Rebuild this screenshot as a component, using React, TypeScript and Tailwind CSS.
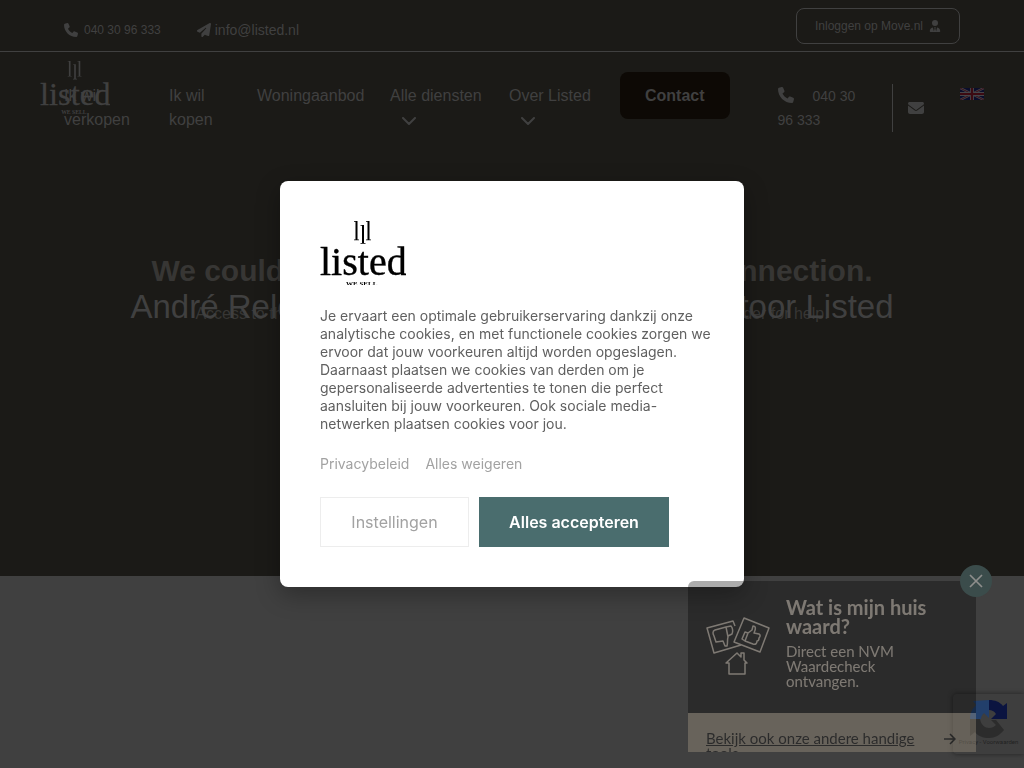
import { clsx } from "clsx";
import { FaEnvelope, FaPaperPlane, FaPhone, FaUserTie } from "react-icons/fa6";

interface LogoProps {
  className?: string;
}

function Logo({ className }: LogoProps) {
  return (
    <svg viewBox="0 0 86 64" className={className} fill="currentColor" role="img">
      <path d="M35 0h2.500v18.500H39v.7h-5v-.7h1.500V.7H34V0zM41.500 4H44v18H45.500v.7h-5V22H42V4.700h-1.500V4zM47 0h2.500v18.500H51v.7h-5v-.7h1.500V.7H46V0z" />
      <text x="0" y="54" fontSize="40" fontFamily="Liberation Serif, serif" stroke="currentColor" strokeWidth="0.400">
        listed
      </text>
      <text x="26" y="65" fontSize="7" fontWeight="700" fontFamily="Liberation Serif, serif">
        WE SELL
      </text>
    </svg>
  );
}

function Flag() {
  return (
    <svg viewBox="0 0 24 12" className="h-3 w-6">
      <path fill="#0a0d2b" d="M0 0h24v12H0z" />
      <path stroke="#45454a" strokeWidth="2.400" d="m0 0 24 12M24 0 0 12" />
      <path stroke="#3c0a12" strokeWidth="0.900" d="m0 0 24 12M24 0 0 12" />
      <path stroke="#45454a" strokeWidth="4" d="M12 0v12M0 6h24" />
      <path stroke="#3c0a12" strokeWidth="2.200" d="M12 0v12M0 6h24" />
    </svg>
  );
}

function ChevronDown() {
  return (
    <svg viewBox="0 0 14 8" className="ml-3 inline h-2 w-3.5" fill="none" stroke="currentColor" strokeWidth="2">
      <path strokeLinecap="round" strokeLinejoin="round" d="m1 1 6 6 6-6" />
    </svg>
  );
}

const navItems = [
  { label: "Ik wil verkopen", width: "w-[105px] pr-8", menu: false },
  { label: "Ik wil kopen", width: "w-[88px] pr-8", menu: false },
  { label: "Woningaanbod", width: "w-[133px]", menu: false },
  { label: "Alle diensten", width: "w-[119px] pr-6", menu: true },
  { label: "Over Listed", width: "w-[111px] pr-6", menu: true },
];

function TopBar() {
  return (
    <div className="flex h-[52px] items-start justify-between border-b border-[#404040] px-16 pt-2">
      <div className="flex gap-9 pt-3 leading-5">
        <a href="tel:0403096333" className="flex items-center gap-1.5 text-xs leading-5">
          <FaPhone className="size-3.5" />
          040 30 96 333
        </a>
        <a href="mailto:info@listed.nl" className="flex items-center gap-1 text-sm leading-5">
          <FaPaperPlane className="size-3.5" />
          info@listed.nl
        </a>
      </div>
      <a
        href="#inloggen"
        className="flex h-9 w-[164px] items-center justify-center gap-1.5 rounded-lg border border-[#404040] text-xs"
      >
        Inloggen op Move.nl
        <FaUserTie className="size-3" />
      </a>
    </div>
  );
}

function Header() {
  return (
    <header>
      <TopBar />
      <div className="relative flex items-start pt-8 pl-16 leading-6">
        <Logo className="absolute top-2 left-10 h-[54px] w-[70px]" />
        <nav className="flex">
          {navItems.map((item) => (
            <a key={item.label} href="#menu" className={clsx("block", item.width)}>
              {item.label}
              {item.menu && (
                <>
                  <br />
                  <ChevronDown />
                </>
              )}
            </a>
          ))}
        </nav>
        <a href="#contact" className="-mt-3 rounded-lg bg-[#0d0905] px-[25px] py-3 leading-[23px] font-bold">
          Contact
        </a>
        <a href="tel:0403096333" className="ml-12 w-[114px] pr-6 text-sm leading-6">
          <FaPhone className="mr-[15px] inline size-4 align-[-2px]" /> 040 30 96 333
        </a>
        <a
          href="mailto:info@listed.nl"
          aria-label="E-mail"
          className="flex h-12 items-center border-l border-[#404040] pl-[15px]"
        >
          <FaEnvelope className="size-4" />
        </a>
        <a href="#en" aria-label="English" className="mt-1 ml-9">
          <Flag />
        </a>
      </div>
    </header>
  );
}

function Hero() {
  return (
    <section className="relative h-[75vh] bg-[#1b1a17]">
      <Header />
      <div className="absolute inset-x-0 top-[252px] text-center text-[#373634]">
        <h2 className="text-[30px] leading-[38px] font-bold">We couldn’t verify the security of your connection.</h2>
        <p className="mt-3 leading-6">
          Access to this content has been restricted. Contact your internet service provider for help.
        </p>
      </div>
      <h1 className="absolute inset-x-0 top-[287px] text-center text-[33px] leading-10">
        André Relou Makelaardij is makelaarskantoor Listed
      </h1>
    </section>
  );
}

function RecaptchaBadge() {
  return (
    <div className="absolute right-0 bottom-3.5 flex h-[60px] w-[71px] flex-col items-center rounded-l-sm bg-[#3e3e3e] pt-1.5 shadow-[0_0_5px_#222]">
      <svg viewBox="0 0 38 38" className="size-[38px]">
        <path fill="#0b1440" d="M19 0c6 0 11 2 14 6l4-3v16H21l5-5c-2-3-4-4-7-4z" />
        <path fill="#223f6b" d="M19 0v18l-5-5c-2 2-3 4-3 6H0c0-6 2-10 6-14L3 1z" />
        <path fill="#2c2c2c" d="M0 19h10c1 6 5 9 9 9 3 0 5-1 7-3l-5-5h5l8 10c-4 5-9 8-15 8-6 0-11-2-14-6l-5 4z" />
      </svg>
      <span className="font-['Roboto',sans-serif] text-[6px] leading-2 text-[#222]">Privacy - Voorwaarden</span>
    </div>
  );
}

function HouseIcon() {
  return (
    <svg
      viewBox="0 0 64 58"
      className="h-[58px] w-16"
      fill="none"
      stroke="currentColor"
      strokeWidth="1.500"
      strokeLinejoin="round"
    >
      <path d="m29 9-2-5L1 11l7 25 27-8" />
      <path d="m38 1 25 10-9 24-26-10z" />
      <path d="M20 10 9 13c-3 1-2 4-1 6l2 6 7-1 2 5h2c1-3 0-6 1-9l-2-10zM20 10l5-1c2 2 2 6 1 8l-4 2" />
      <path d="m39 15 3 1-3 8-3-2zM42 16l4-3 1-4c3 0 3 3 1 7l5 1c2 1 1 3 0 4 0 1 0 3-2 3 0 2-1 4-4 3l-8-3" />
      <path d="M23 46h-3l11-10 4 4v-4h3v7l3 3h-2v11H23z" />
    </svg>
  );
}

function ValueWidget() {
  return (
    <aside className="fixed right-12 bottom-4 z-20 w-72 font-['Lato',sans-serif]">
      <div className="h-[171px] overflow-hidden rounded-t-md text-[#fff0dd] opacity-[0.325]">
        <div className="flex h-[132px] items-start gap-4 bg-black px-[18px]">
          <div className="pt-9">
            <HouseIcon />
          </div>
          <div className="flex-1 pt-[17px]">
            <h3 className="text-xl leading-[19px] font-bold">Wat is mijn huis waard?</h3>
            <p className="mt-2 w-32 text-[15px] leading-[15px]">Direct een NVM Waardecheck ontvangen.</p>
          </div>
        </div>
        <a
          href="#tools"
          className="flex items-start bg-[#bcac94] pt-[18px] pr-5 pl-[18px] text-[15px] leading-[15px] text-black"
        >
          <span className="flex-1 underline">Bekijk ook onze andere handige tools</span>
          <svg viewBox="0 0 12 12" className="mt-0.5 size-3" fill="none" stroke="currentColor" strokeWidth="1.500">
            <path d="M0 6h11M6 1l5 5-5 5" />
          </svg>
        </a>
      </div>
      <button
        type="button"
        aria-label="Sluiten"
        className="absolute -top-4 -right-4 grid size-8 place-items-center rounded-full bg-[#3b4c4b] text-[#8e8e8c]"
      >
        <svg viewBox="0 0 14 14" className="size-3.5" stroke="currentColor" strokeWidth="1.700">
          <path d="m1 1 12 12M13 1 1 13" />
        </svg>
      </button>
    </aside>
  );
}

function CookieDialog() {
  return (
    <div className="fixed inset-0 z-10 grid place-items-center font-['Inter',sans-serif]">
      <div
        role="dialog"
        aria-label="Cookies"
        className="w-[464px] rounded-lg bg-white p-10 shadow-[0_8px_24px_rgba(0,0,0,0.3)]"
      >
        <Logo className="h-16 w-[86px] text-black" />
        <p className="mt-[22px] -mr-4 text-sm leading-[18px] text-[#606060]">
          Je ervaart een optimale gebruikerservaring dankzij onze analytische cookies, en met functionele cookies
          zorgen we ervoor dat jouw voorkeuren altijd worden opgeslagen. Daarnaast plaatsen we cookies van derden om je
          gepersonaliseerde advertenties te tonen die perfect aansluiten bij jouw voorkeuren. Ook sociale
          media-netwerken plaatsen cookies voor jou.
        </p>
        <div className="mt-[22px] flex gap-4 text-sm leading-[18px] text-[#a2a2a2]">
          <a href="#privacy">Privacybeleid</a>
          <a href="#weigeren">Alles weigeren</a>
        </div>
        <div className="mt-6 flex gap-2.5">
          <button type="button" className="h-[50px] w-[149px] border border-[#ededed] text-[#a2a2a2]">
            Instellingen
          </button>
          <button type="button" className="h-[50px] w-[190px] bg-[#4a6d6e] font-semibold text-white">
            Alles accepteren
          </button>
        </div>
      </div>
    </div>
  );
}

export default function App() {
  return (
    <main className="relative min-h-screen bg-[#404040] font-['Liberation_Sans',sans-serif] text-base text-[#404040]">
      <Hero />
      <RecaptchaBadge />
      <CookieDialog />
      <ValueWidget />
    </main>
  );
}
